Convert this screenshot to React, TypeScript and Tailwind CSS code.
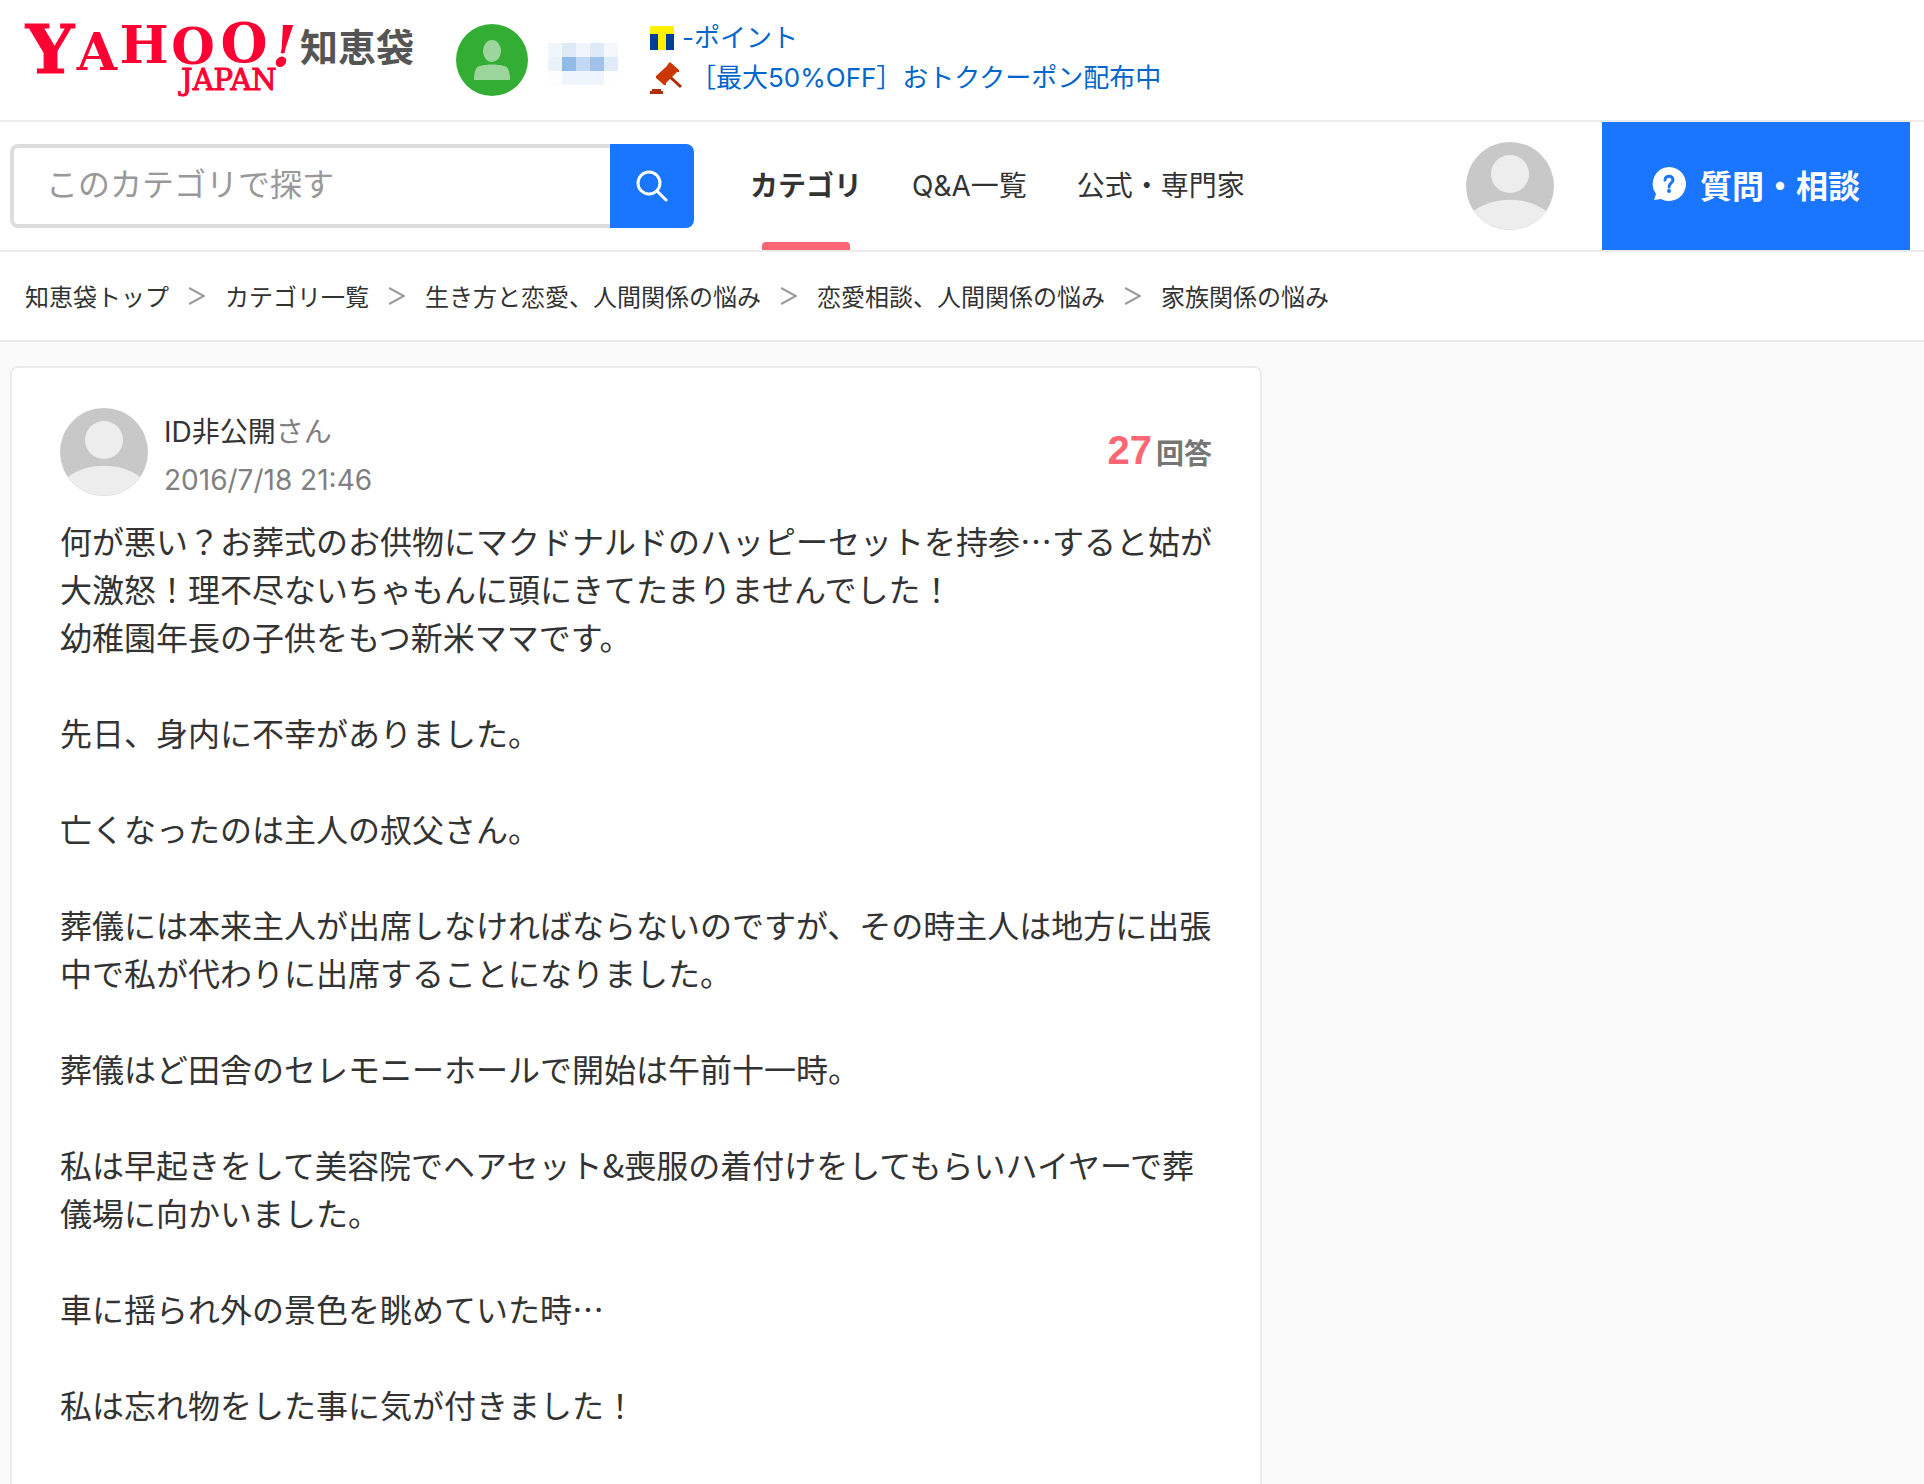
import React from "react";

const CJK = "font-['Noto_Sans_CJK_JP',sans-serif]";
const MIXED = "font-['Inter','Noto_Sans_CJK_JP',sans-serif]";

function Logo() {
  return (
    <a href="#" aria-label="YAHOO! JAPAN 知恵袋" className="flex shrink-0 items-start">
      <svg width="280" height="76" viewBox="18 20 280 76" className="overflow-visible font-['DejaVu_Serif',serif] font-bold" fill="#ff0033" aria-hidden="true">
        <g textAnchor="middle">
          <text x="50" y="73" fontSize="68" stroke="#ff0033">Y</text>
          <text x="97" y="70" fontSize="52">A</text>
          <text x="144" y="63" fontSize="52">H</text>
          <text x="193" y="64" fontSize="50">O</text>
          <text x="244" y="62" fontSize="54">O</text>
          <text x="284" y="66" fontSize="56" fontStyle="italic">!</text>
        </g>
        <text x="181" y="90" fontSize="29" fontWeight="400" stroke="#ff0033">JAPAN</text>
      </svg>
      <span className="pl-0.5 pt-1.5 text-[38px] leading-[38px] font-bold text-[#555555]">知恵袋</span>
    </a>
  );
}

function Avatar() {
  return (
    <svg width="88" height="88" viewBox="0 0 88 88" className="shrink-0" aria-hidden="true">
      <circle cx="44" cy="44" r="44" fill="#c8c8c8" />
      <circle cx="44" cy="32" r="19" fill="#ededed" />
      <path d="M8 69 C27 54 61 54 80 69 A44 44 0 0 1 8 69Z" fill="#ededed" />
    </svg>
  );
}

function GreenAvatar() {
  return (
    <svg width="72" height="72" viewBox="0 0 72 72" className="shrink-0" aria-hidden="true">
      <circle cx="36" cy="36" r="36" fill="#34ad34" />
      <ellipse cx="36" cy="27" rx="9" ry="11" fill="#9dd69d" />
      <path d="M18 56 C18 47 20 43 24 42 C31 40 41 40 48 42 C52 43 54 47 54 56Z" fill="#9dd69d" />
    </svg>
  );
}

const mosaic = [
  ["bg-[#f0f6fc]", "bg-[#dfeaf8]", "bg-[#f1f6fd]", "bg-[#dfeaf8]", "bg-[#f4f8fd]"],
  ["bg-[#eaf2fa]", "bg-[#92bae8]", "bg-[#c3d8f2]", "bg-[#a1c3eb]", "bg-[#e0ebf9]"],
  ["bg-[#fdfdfe]", "bg-[#eff5fc]", "bg-[#eff5fc]", "bg-[#eff5fc]", "bg-[#fefefe]"],
];

function UserName() {
  return (
    <a href="#" aria-label="ユーザー" className="mt-2 grid shrink-0 grid-cols-5">
      {mosaic.flat().map((c, i) => (
        <span key={i} className={`size-[14px] ${c}`} />
      ))}
    </a>
  );
}

function Header() {
  return (
    <header className="flex h-[122px] border-b-2 border-[#ebebeb] pl-[18px]">
      <div className="pt-5">
        <Logo />
      </div>
      <div className="ml-[42px] flex h-[120px] items-center gap-5">
        <GreenAvatar />
        <UserName />
      </div>
      <ul className={`ml-8 pt-[18px] text-[26px] leading-10 text-[#0066cc] ${MIXED}`}>
        <li>
          <a href="#" className="flex items-center gap-2">
            <svg width="24" height="24" viewBox="0 0 24 24" aria-hidden="true">
              <rect width="24" height="24" fill="#003f98" />
              <path d="M0 0H24V8H16V24H8V8H0Z" fill="#fff100" />
            </svg>
            -ポイント
          </a>
        </li>
        <li>
          <a href="#" className="flex items-center gap-2">
            <svg width="32" height="32" viewBox="0 0 32 32" aria-hidden="true">
              <path d="M18 15L20 13L32 24L30 26Z" fill="#a92b06" />
              <path d="M6 14L17 4L18 2L20 0L29 8L29 10L27 10L16 21V23L14 23L6 16Z" fill="#cc3700" />
              <path d="M2 27H11V29H13V32H0V29H2Z" fill="#b32d05" />
            </svg>
            ［最大50%OFF］おトククーポン配布中
          </a>
        </li>
      </ul>
    </header>
  );
}

function NavBar() {
  return (
    <nav className="flex h-[130px] items-center border-b-2 border-[#ebebeb] pr-[14px] pl-[10px]">
      <form className="flex h-[84px] w-[684px] shrink-0">
        <input
          type="search"
          aria-label="このカテゴリで探す"
          placeholder="このカテゴリで探す"
          className="min-w-0 flex-1 rounded-l-lg border-4 border-r-0 border-[#dddddd] pb-2 pl-8 text-[32px] placeholder:text-[#999999]"
        />
        <button type="button" aria-label="検索" className="flex w-[84px] items-center justify-center rounded-r-lg bg-[#1a75ff]">
          <svg width="32" height="32" viewBox="0 0 32 32" fill="none" stroke="#fff" strokeWidth="3" aria-hidden="true">
            <circle cx="13" cy="13" r="11" />
            <path d="M21 21L30 30" strokeLinecap="round" />
          </svg>
        </button>
      </form>
      <ul className={`ml-14 flex h-full gap-[50px] text-[28px] text-[#333333] ${MIXED}`}>
        <li className="relative flex items-center">
          <a href="#" className="font-bold">カテゴリ</a>
          <span className="absolute bottom-0 left-1/2 h-2 w-[88px] -translate-x-1/2 rounded-t bg-[#ff6674]" />
        </li>
        <li className="flex items-center">
          <a href="#">Q&amp;A一覧</a>
        </li>
        <li className="flex items-center">
          <a href="#">公式・専門家</a>
        </li>
      </ul>
      <a href="#" aria-label="マイページ" className="mr-12 ml-auto">
        <Avatar />
      </a>
      <button type="button" className="flex h-full w-[308px] items-center justify-center gap-[14px] bg-[#1a75ff] pb-1 text-[32px] font-bold text-white">
        <svg width="34" height="34" viewBox="0 0 34 34" aria-hidden="true">
          <path d="M17 0A17 17 0 1 1 9 32L2 33L4 27A17 17 0 0 1 17 0Z" fill="#fff" />
          <path d="M13 13C13 8 21 8 21 13C21 16 17 16 17 20" fill="none" stroke="#1a75ff" strokeWidth="3" strokeLinecap="round" />
          <circle cx="17" cy="24" r="2" fill="#1a75ff" />
        </svg>
        質問・相談
      </button>
    </nav>
  );
}

const crumbs = ["知恵袋トップ", "カテゴリ一覧", "生き方と恋愛、人間関係の悩み", "恋愛相談、人間関係の悩み", "家族関係の悩み"];

function Breadcrumbs() {
  return (
    <ol className="flex h-[90px] items-center border-b-2 border-[#ebebeb] pl-[25px] text-2xl text-[#333333]">
      {crumbs.map((c, i) => (
        <li key={c} className="flex items-center">
          {i > 0 && (
            <svg width="16" height="18" viewBox="0 0 16 18" fill="none" stroke="#999999" strokeWidth="2" className="mx-5" aria-hidden="true">
              <path d="M0 1L15 9L0 17" />
            </svg>
          )}
          <a href="#">{c}</a>
        </li>
      ))}
    </ol>
  );
}

const body = `何が悪い？お葬式のお供物にマクドナルドのハッピーセットを持参…すると姑が大激怒！理不尽ないちゃもんに頭にきてたまりませんでした！
幼稚園年長の子供をもつ新米ママです。

先日、身内に不幸がありました。

亡くなったのは主人の叔父さん。

葬儀には本来主人が出席しなければならないのですが、その時主人は地方に出張中で私が代わりに出席することになりました。

葬儀はど田舎のセレモニーホールで開始は午前十一時。

私は早起きをして美容院でヘアセット&喪服の着付けをしてもらいハイヤーで葬儀場に向かいました。

車に揺られ外の景色を眺めていた時…

私は忘れ物をした事に気が付きました！`;

function Question() {
  return (
    <article className="w-[1252px] rounded-t-lg border-2 border-b-0 border-[#ebebeb] bg-white px-12 pt-10 pb-24">
      <div className="flex items-start">
        <Avatar />
        <div className={`ml-4 text-[28px] leading-[48px] text-[#808080] ${MIXED}`}>
          <p>
            <a href="#" className="text-[#333333]">ID非公開</a>さん
          </p>
          <p>2016/7/18 21:46</p>
        </div>
        <p className="ml-auto flex items-baseline gap-1 pt-3 text-[28px] font-bold text-[#767676]">
          <span className="font-['Liberation_Sans',sans-serif] text-[40px] text-[#ff6674]">27</span>
          回答
        </p>
      </div>
      <p className="mt-3 text-[32px] leading-[48px] whitespace-pre-wrap text-[#333333]">{body}</p>
    </article>
  );
}

export default function App() {
  return (
    <div lang="ja" className={`h-screen overflow-hidden bg-white ${CJK}`}>
      <Header />
      <NavBar />
      <Breadcrumbs />
      <main className="min-h-screen bg-[#fafafa] pt-6 pl-[10px]">
        <Question />
      </main>
    </div>
  );
}
